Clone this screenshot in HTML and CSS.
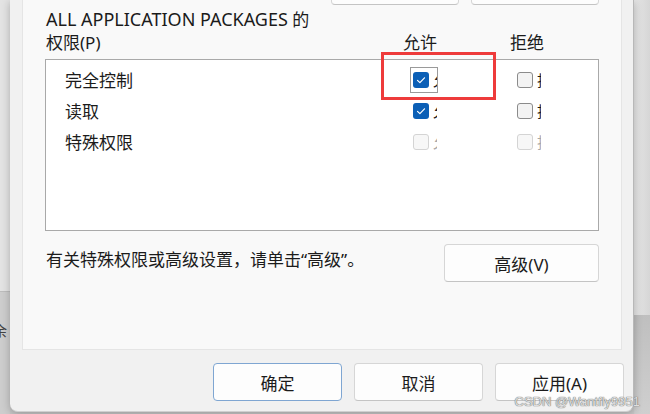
FILE: index.html
```html
<!DOCTYPE html>
<html lang="zh-CN">

<head>
    <meta charset="UTF-8">
    <meta name="viewport" content="width=device-width, initial-scale=1.0">
    <title>权限</title>
    <link rel="stylesheet" href="styles.css">
</head>

<body>
    <div class="left-edge">
        <div class="left-top"></div>
        <div class="left-bottom"><span class="left-text">余</span></div>
    </div>

    <div class="dialog">
        <div class="tab-page">
            <div class="top-buttons">
                <button class="btn top-btn">添加(D)...</button>
                <button class="btn top-btn">删除(R)</button>
            </div>

            <div class="perm-header">
                <div class="perm-title"><span class="latin">ALL APPLICATION PACKAGES</span> 的<br>权限(P)</div>
                <div class="col-allow">允许</div>
                <div class="col-deny">拒绝</div>
            </div>

            <div class="perm-list">
                <div class="perm-row">
                    <div class="perm-name">完全控制</div>
                    <div class="check-cell">
                        <span class="check focused">
                            <span class="box checked">
                                <svg viewBox="0 0 16 16" width="16" height="16"><path d="M4.5 8.3l2.4 2.4 4.6-4.9" fill="none" stroke="#fff" stroke-width="1.2" stroke-linecap="round" stroke-linejoin="round"/></svg>
                            </span>
                            <span class="clip">允许</span>
                        </span>
                    </div>
                    <div class="check-cell">
                        <span class="check">
                            <span class="box"></span>
                            <span class="clip">拒绝</span>
                        </span>
                    </div>
                </div>
                <div class="perm-row">
                    <div class="perm-name">读取</div>
                    <div class="check-cell">
                        <span class="check">
                            <span class="box checked">
                                <svg viewBox="0 0 16 16" width="16" height="16"><path d="M4.5 8.3l2.4 2.4 4.6-4.9" fill="none" stroke="#fff" stroke-width="1.2" stroke-linecap="round" stroke-linejoin="round"/></svg>
                            </span>
                            <span class="clip">允许</span>
                        </span>
                    </div>
                    <div class="check-cell">
                        <span class="check">
                            <span class="box"></span>
                            <span class="clip">拒绝</span>
                        </span>
                    </div>
                </div>
                <div class="perm-row">
                    <div class="perm-name">特殊权限</div>
                    <div class="check-cell">
                        <span class="check disabled">
                            <span class="box"></span>
                            <span class="clip">允许</span>
                        </span>
                    </div>
                    <div class="check-cell">
                        <span class="check disabled">
                            <span class="box"></span>
                            <span class="clip">拒绝</span>
                        </span>
                    </div>
                </div>

                <!-- annotation drawn over the screenshot -->
                <div class="mark"></div>
            </div>

            <div class="advanced-row">
                <p class="hint">有关特殊权限或高级设置，请单击“高级”。</p>
                <button class="btn advanced-btn">高级(V)</button>
            </div>
        </div>

        <div class="footer">
            <button class="btn foot-btn default">确定</button>
            <button class="btn foot-btn">取消</button>
            <button class="btn foot-btn">应用(A)</button>
        </div>
    </div>

    <div class="right-edge">
        <div class="right-top"></div>
        <div class="right-bottom"></div>
    </div>

    <div class="watermark">CSDN @Wantfly9951</div>
</body>

</html>
```

FILE: styles.css
```css
body {
    margin: 0;
    height: 414px;
    overflow: hidden;
    display: flex;
    font-family: "Noto Sans", "Noto Sans CJK SC", sans-serif;
    font-size: 17px;
    color: #1b1b1b;
    background-color: #c9c9c9;
    position: relative;
}

.left-edge {
    width: 10px;
    display: flex;
    flex-direction: column;
    overflow: hidden;
}

.left-top {
    height: 291px;
    background-color: #e3e3e3;
    border-bottom: 1px solid #bdbdbd;
}

.left-bottom {
    flex: 1;
    background-color: #cdcdcd;
}

.left-text {
    display: block;
    margin: 28px 0 0 -7px;
    font-size: 14px;
    color: #444;
}

.dialog {
    width: 624px;
    height: 412px;
    box-sizing: border-box;
    background-color: #f1f1f1;
    border-right: 1px solid #b8b8b8;
    border-bottom: 1px solid #d0d0d0;
    border-radius: 0 0 8px 8px;
    box-shadow: 0 2px 8px rgba(0, 0, 0, 0.25);
    display: flex;
    flex-direction: column;
    z-index: 1;
}

.tab-page {
    height: 350px;
    margin: 0 11px 0 12px;
    padding: 0 22px;
    box-sizing: border-box;
    background-color: #f9f9f9;
    border: 1px solid #e5e5e5;
    border-top: none;
}

.btn {
    font-family: inherit;
    font-size: 17px;
    color: #1b1b1b;
    background-color: #fdfdfd;
    border: 1px solid #d6d6d6;
    border-bottom-color: #c4c4c4;
    border-radius: 4px;
    height: 38px;
    padding: 0;
}

.top-buttons {
    display: flex;
    justify-content: flex-end;
    gap: 12px;
    margin-top: -33px;
}

.top-btn {
    width: 128px;
}

.perm-header {
    display: grid;
    grid-template-columns: 358px 104px 1fr;
    align-items: end;
    margin-top: 3px;
    line-height: 23px;
}

.perm-title {
    padding-left: 1px;
}

.perm-title .latin {
    font-size: 18px;
}

.col-deny {
    padding-left: 3px;
}

.perm-list {
    position: relative;
    margin-top: 5px;
    height: 172px;
    box-sizing: border-box;
    background-color: #fff;
    border: 1px solid #a9a9a9;
    padding-top: 4px;
}

.perm-row {
    display: grid;
    grid-template-columns: 357px 104px 1fr;
    align-items: center;
    height: 31px;
}

.perm-name {
    padding-left: 19px;
}

.check-cell {
    display: flex;
    align-items: center;
    padding-left: 7px;
}

.check {
    display: inline-flex;
    align-items: center;
    padding: 4px 0 4px 2px;
    border: 1px solid transparent;
}

.check.focused {
    border-color: #9a9a9a;
}

.box {
    width: 16px;
    height: 16px;
    box-sizing: border-box;
    border: 1px solid #8b8b8b;
    border-radius: 3px;
    background-color: #f3f3f3;
}

.box.checked {
    border: none;
    background-color: #0b5fb6;
}

.box svg {
    display: block;
}

.clip {
    width: 4px;
    margin-left: 4px;
    overflow: hidden;
    white-space: nowrap;
    font-size: 15px;
    line-height: 16px;
}

.check.disabled .box {
    border-color: #d4d4d4;
    background-color: #f7f7f7;
}

.check.disabled .clip {
    color: #a8a8a8;
}

.mark {
    position: absolute;
    left: 335px;
    top: -8px;
    width: 115px;
    height: 48px;
    border: 3.5px solid #ee3b3b;
    box-sizing: border-box;
}

.advanced-row {
    display: flex;
    justify-content: space-between;
    align-items: flex-start;
    margin-top: 13px;
}

.hint {
    margin: 2px 0 0 1px;
}

.advanced-btn {
    width: 155px;
}

.footer {
    display: flex;
    justify-content: flex-end;
    gap: 12px;
    padding: 13px 9px 0 0;
}

.foot-btn {
    width: 129px;
}

.foot-btn.default {
    border: 1px solid #7fa6d2;
}

.right-edge {
    flex: 1;
    display: flex;
    flex-direction: column;
}

.right-top {
    height: 315px;
    background: linear-gradient(to right, #e6e6e6, #d6d6d6);
}

.right-bottom {
    flex: 1;
    background: linear-gradient(to bottom, #bfbfbf, #cfcfcf);
}

.watermark {
    position: absolute;
    right: 10px;
    bottom: 5px;
    z-index: 2;
    font-family: "Liberation Sans", sans-serif;
    font-size: 13px;
    color: #dedede;
    text-shadow: 0 0 1px #6f6f6f, 0 0 1px #6f6f6f;
}
```
